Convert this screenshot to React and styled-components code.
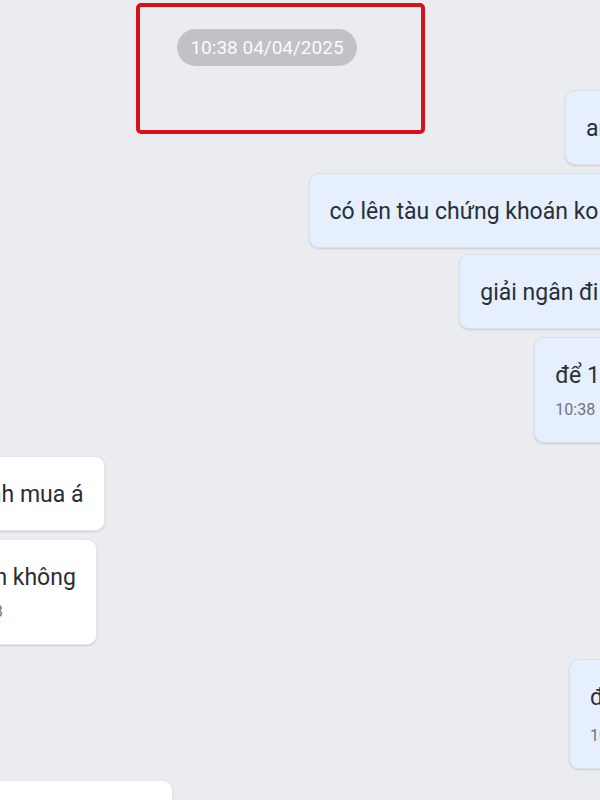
import React from 'react';
import styled, { createGlobalStyle } from 'styled-components';

const Global = createGlobalStyle`
  html, body { margin: 0; padding: 0; background: #ebecef; }
  body { font-family: Roboto, "Noto Sans", "Liberation Sans", sans-serif; }
`;

const Viewport = styled.div`
  position: relative;
  width: 600px;
  height: 800px;
  overflow: hidden;
  background: #ebecef;
`;

const Thread = styled.div`
  display: flex;
  flex-direction: column;
  margin-left: -58px;
  width: 721px;
  padding-top: 29px;
`;

const DateRow = styled.div`
  display: flex;
  justify-content: center;
  padding-right: 71px;
  margin-bottom: 24px;
`;

const DatePill = styled.div`
  height: 37px;
  line-height: 37px;
  padding: 0 13px;
  border-radius: 19px;
  background: #c1c2c5;
  color: #fbfbfc;
  font-size: 19px;
`;

const Row = styled.div`
  display: flex;
  justify-content: ${p => (p.$mine ? 'flex-end' : 'flex-start')};
  margin-top: ${p => p.$gap}px;
`;

const Bubble = styled.div`
  display: flex;
  flex-direction: column;
  padding: 25px 20px 23px;
  border-radius: 10px;
  background: ${p => (p.$mine ? '#e5effd' : '#ffffff')};
  border: 1px solid ${p => (p.$mine ? '#d9e2ee' : '#e6e7ea')};
  box-shadow: 0 1px 2px rgba(0, 0, 0, 0.14);
  white-space: nowrap;
`;

const Text = styled.span`
  font-size: 23px;
  line-height: 25px;
  color: #2a2e35;
`;

const Meta = styled.span`
  margin-top: ${p => p.$space || 13}px;
  font-size: 16px;
  line-height: 18px;
  color: #6f747c;
`;

const Annotation = styled.div`
  position: absolute;
  left: 136px;
  top: 3px;
  width: 289px;
  height: 131px;
  box-sizing: border-box;
  border: 4px solid #d8121b;
  border-radius: 5px;
`;

const messages = [
  { mine: true, text: 'anh à', gap: 0 },
  { mine: true, text: 'có lên tàu chứng khoán ko anh', gap: 8 },
  { mine: true, text: 'giải ngân đi anh', gap: 6 },
  { mine: true, text: 'để 1 lúc.', time: '10:38', gap: 8 },
  { mine: false, text: 'mình mua á', gap: 13 },
  { mine: false, text: 'luôn không', time: '10:38', gap: 8 },
  { mine: true, text: 'đúng', time: '10:38', gap: 14, space: 17 },
  { mine: false, text: 'ok có muốn không', gap: 11 },
];

export default function App() {
  return (
    <>
      <Global />
      <Viewport>
        <Thread>
          <DateRow>
            <DatePill>10:38 04/04/2025</DatePill>
          </DateRow>
          {messages.map((m, i) => (
            <Row key={i} $mine={m.mine} $gap={m.gap}>
              <Bubble $mine={m.mine}>
                <Text>{m.text}</Text>
                {m.time && <Meta $space={m.space}>{m.time}</Meta>}
              </Bubble>
            </Row>
          ))}
        </Thread>
        <Annotation />
      </Viewport>
    </>
  );
}
